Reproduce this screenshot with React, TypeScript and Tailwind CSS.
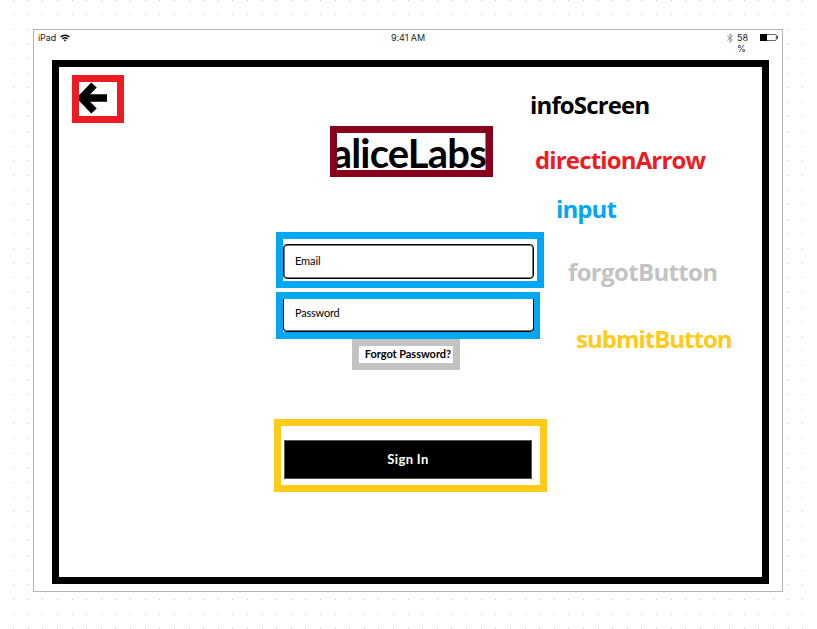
import type { ReactNode } from "react";

const columns = Array.from({ length: 56 }, (_, i) => Math.round(13.2 + i * 14.61));
const rows = Array.from({ length: 44 }, (_, i) => Math.floor(i * 14.62));

function DotGrid() {
  return (
    <svg className="absolute inset-0" width="817" height="629" shapeRendering="crispEdges" aria-hidden="true">
      {rows.map((y) =>
        columns.map((x) => <rect key={`${x}-${y}`} x={x} y={y} width="1" height="1" fill="#c8c8c8" />),
      )}
    </svg>
  );
}

function StatusBar() {
  return (
    <header className="flex h-[30px] items-start justify-between pt-[2px] pr-1 pl-1 font-['Inter',sans-serif] text-[9px] leading-[11px] text-[#222]">
      <div className="flex w-[120px] items-center gap-1">
        <span className="tracking-[-0.1px]">iPad</span>
        <svg width="10" height="8" viewBox="0 0 10 8" fill="none" stroke="#111" strokeWidth="1.4">
          <path d="M.6 3a6.3 6.3 0 0 1 8.8 0M2.4 4.9a3.8 3.8 0 0 1 5.2 0" />
          <path d="M3.6 6.1a2 2 0 0 1 2.8 0L5 7.6z" fill="#111" stroke="none" />
        </svg>
      </div>
      <span className="tracking-[-0.05px]">9:41 AM</span>
      <div className="flex w-[120px] justify-end">
        <svg className="mt-px mr-[3px]" width="8" height="10" viewBox="0 0 8 10" fill="none" stroke="#888" strokeWidth="0.9">
          <path d="M1.2 2.6 6.4 7 4 9.2V.8L6.4 3 1.2 7.4" />
        </svg>
        <span className="mr-[11px] w-[12px] text-left">58 %</span>
        <svg className="mt-px" width="18" height="9" viewBox="0 0 18 9">
          <rect x=".5" y="1.5" width="15.8" height="6" rx="1" fill="white" stroke="#666" />
          <path d="M0 1h7v7H0z" fill="#000" />
          <path d="M17 3h.5q.5 1.3 0 2.5H17z" fill="#111" stroke="#111" strokeWidth=".5" />
        </svg>
      </div>
    </header>
  );
}

function Label({ className, children }: { className: string; children: ReactNode }) {
  return <div className={`h-8 w-max text-2xl leading-8 font-bold ${className}`}>{children}</div>;
}

export default function App() {
  return (
    <div className="relative h-[629px] w-[817px] overflow-hidden bg-white pt-[29px] pl-[33px]">
      <DotGrid />
      <div className="relative h-[563px] w-[750px] border border-[#b5b5b5] bg-white">
        <StatusBar />
        <main className="ml-[18px] flex h-[524px] w-[717px] border-[7px] border-black bg-white font-['Lato',sans-serif] text-black">
          <div className="w-[215px] shrink-0 pt-2 pl-[13px]">
            <button className="block h-[48px] w-[52px] border-[7px] border-[#ed1c24]" aria-label="Back">
              <svg width="38" height="34" viewBox="0 0 38 34" fill="none" stroke="#000" strokeWidth="7.5">
                <path d="M28 16H4M15 3 2.5 16 15 29" />
              </svg>
            </button>
          </div>

          <div className="flex w-[256px] shrink-0 flex-col items-start pt-[59px]">
            <div className="ml-[56px] flex h-[51px] w-[163px] justify-end overflow-hidden border-[7px] border-[#88001b] shadow-[inset_-1px_0_0_#5b9be8]">
              <span className="h-[37px] shrink-0 text-[40px] leading-[41px] font-bold tracking-[-0.8px]">aliceLabs</span>
            </div>

            <div className="mt-[55px] ml-[2px] h-[56px] w-[268px] border-[7px] border-[#00a8f3] pt-[5px]">
              <div className="flex h-[35px] w-[251px] items-start rounded-[4px] border border-black pt-[8px] pl-[11px] text-[11px] leading-4 tracking-[-0.1px] shadow-[inset_0_0_0_1px_#777]">
                <span>Email</span>
              </div>
            </div>
            <div className="mt-1 ml-[2px] h-[47px] w-[264px] border-[7px] border-[#00a8f3]">
              <div className="flex h-[33px] w-[251px] items-start rounded-b-[4px] border border-t-0 border-black pt-[6px] pl-[11px] text-[11px] leading-4 tracking-[-0.2px] shadow-[inset_0_-1px_0_#777]">
                <span>Password</span>
              </div>
            </div>
            <button className="ml-[78px] flex h-[31px] w-[108px] items-start justify-end border-[7px] border-[#c3c3c3] pr-[2px] text-[11px] leading-[15px] font-bold tracking-[-0.05px] whitespace-nowrap">
              Forgot Password?
            </button>

            <div className="mt-[49px] h-[73px] w-[273px] border-[7px] border-[#ffca18] pt-[14px] pl-[3px]">
              <button className="block h-[39px] w-[248px] border border-[#555] bg-black text-[13px] font-bold tracking-[0.35px] text-white">
                Sign In
              </button>
            </div>
          </div>

          <aside className="pt-[22px] font-['Open_Sans',sans-serif]">
            <Label className="tracking-[-0.85px] text-black">infoScreen</Label>
            <Label className="mt-[23px] ml-[5px] tracking-[-0.85px] text-[#ed1c24]">directionArrow</Label>
            <Label className="mt-[17px] ml-[26px] tracking-[-0.9px] text-[#00a8f3]">input</Label>
            <Label className="mt-[31px] ml-[38px] tracking-[-0.65px] text-[#c3c3c3]">forgotButton</Label>
            <Label className="mt-[35px] ml-[46px] tracking-[-1px] text-[#ffca18]">submitButton</Label>
          </aside>
        </main>
      </div>
    </div>
  );
}
